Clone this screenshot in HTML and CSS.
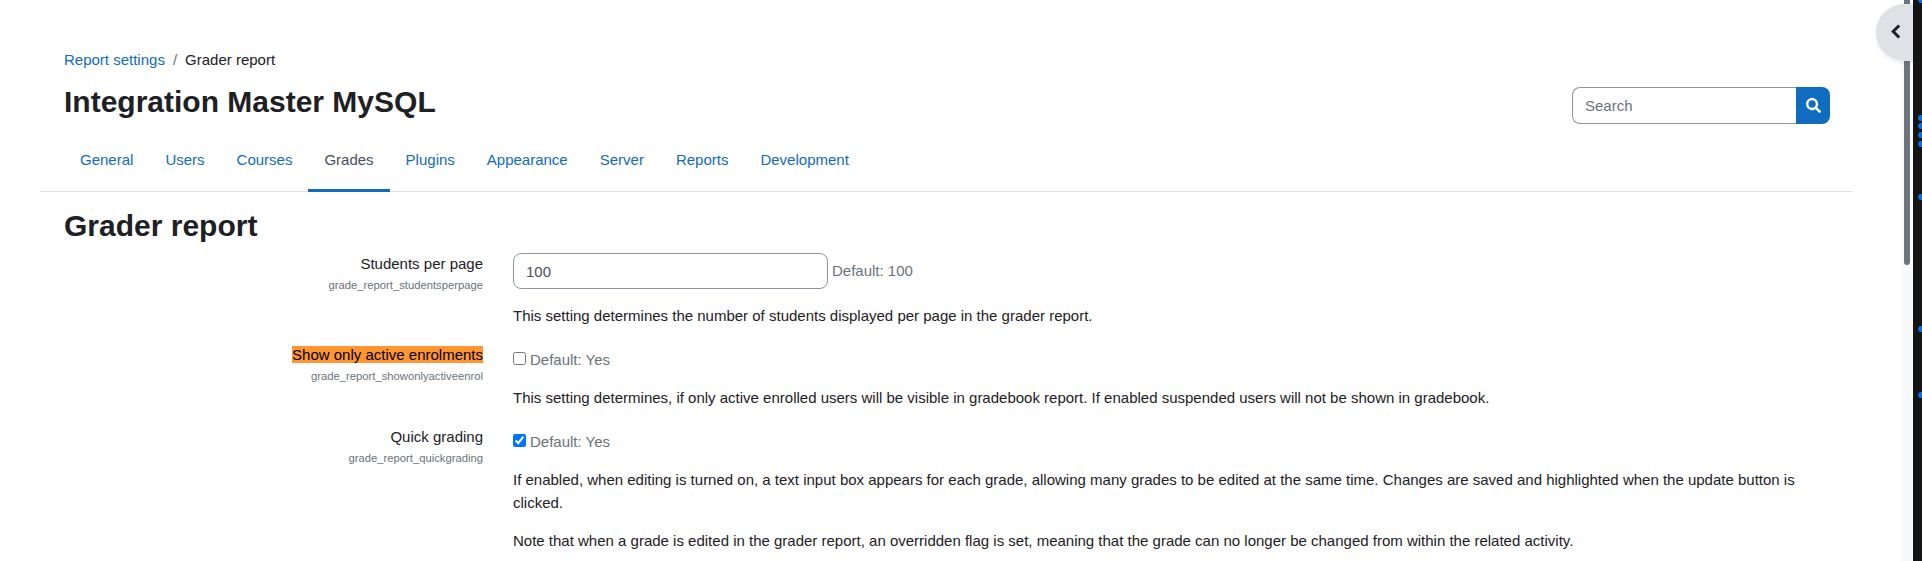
FILE: index.html
```html
<!DOCTYPE html>
<html lang="en">
<head>
  <meta charset="UTF-8" />
  <title>Grader report</title>
  <link rel="stylesheet" href="styles.css">
</head>
<body>

  <div class="page">
    <div class="container">
      <header class="page-header">
        <div>
          <nav class="breadcrumb">
            <a href="#">Report settings</a>
            <span class="sep">/</span>
            <span>Grader report</span>
          </nav>
          <h1>Integration Master MySQL</h1>
        </div>
        <form class="search">
          <input type="text" placeholder="Search">
          <button type="button" aria-label="Search">
            <svg viewBox="0 0 512 512" width="15" height="15"><path fill="#fff" d="M505 442.7L405.3 343c-4.5-4.5-10.6-7-17-7H372c27.6-35.3 44-79.7 44-128C416 93.1 322.9 0 208 0S0 93.1 0 208s93.1 208 208 208c48.3 0 92.7-16.4 128-44v16.3c0 6.4 2.5 12.5 7 17l99.7 99.7c9.4 9.4 24.6 9.4 33.9 0l28.3-28.3c9.4-9.4 9.4-24.6.1-34zM208 336c-70.7 0-128-57.2-128-128 0-70.7 57.2-128 128-128 70.7 0 128 57.2 128 128 0 70.7-57.2 128-128 128z"/></svg>
          </button>
        </form>
      </header>

      <ul class="tabs">
        <li><a href="#">General</a></li>
        <li><a href="#">Users</a></li>
        <li><a href="#">Courses</a></li>
        <li><a href="#" class="active">Grades</a></li>
        <li><a href="#">Plugins</a></li>
        <li><a href="#">Appearance</a></li>
        <li><a href="#">Server</a></li>
        <li><a href="#">Reports</a></li>
        <li><a href="#">Development</a></li>
      </ul>

      <div class="content">
        <h2>Grader report</h2>

        <div class="setting setting-first">
          <div class="setting-label">
            <label>Students per page</label>
            <small>grade_report_studentsperpage</small>
          </div>
          <div class="setting-body">
            <div class="control">
              <input class="text-input" type="text" value="100">
              <span class="default">Default: 100</span>
            </div>
            <p>This setting determines the number of students displayed per page in the grader report.</p>
          </div>
        </div>

        <div class="setting">
          <div class="setting-label">
            <label><span class="highlight">Show only active enrolments</span></label>
            <small>grade_report_showonlyactiveenrol</small>
          </div>
          <div class="setting-body">
            <div class="control control-check">
              <input type="checkbox">
              <span class="default">Default: Yes</span>
            </div>
            <p>This setting determines, if only active enrolled users will be visible in gradebook report. If enabled suspended users will not be shown in gradebook.</p>
          </div>
        </div>

        <div class="setting">
          <div class="setting-label">
            <label>Quick grading</label>
            <small>grade_report_quickgrading</small>
          </div>
          <div class="setting-body">
            <div class="control control-check">
              <input type="checkbox" checked>
              <span class="default">Default: Yes</span>
            </div>
            <p>If enabled, when editing is turned on, a text input box appears for each grade, allowing many grades to be edited at the same time. Changes are saved and highlighted when the update button is clicked.</p>
            <p>Note that when a grade is edited in the grader report, an overridden flag is set, meaning that the grade can no longer be changed from within the related activity.</p>
          </div>
        </div>
      </div>
    </div>
  </div>

  <div class="scrollbar"><div class="thumb"></div></div>

  <div class="strip">
    <i class="dot dot-1"></i>
    <i class="dot dot-2"></i>
    <i class="dot dot-3"></i>
    <i class="dot dot-4"></i>
    <i class="dot dot-5"></i>
    <i class="dot dot-6"></i>
    <i class="dot dot-7"></i>
    <i class="dot dot-8"></i>
  </div>

  <button class="drawer-toggle" type="button" aria-label="Open block drawer">
    <svg viewBox="0 0 10 15" width="10" height="15"><polyline points="8.2,1.5 2.2,7.5 8.2,13.5" fill="none" stroke="#1d2125" stroke-width="3"/></svg>
  </button>

</body>
</html>
```

FILE: styles.css
```css
* {
  margin: 0;
  padding: 0;
  box-sizing: border-box;
}

html, body {
  height: 100%;
  overflow: hidden;
}

body {
  display: flex;
  font-family: "Liberation Sans", Arial, sans-serif;
  font-size: 15px;
  line-height: 22.5px;
  color: #1d2125;
  background: #fff;
}

a {
  color: #0f6cbf;
  text-decoration: none;
}

.page {
  flex: 1;
  min-width: 0;
  padding-left: 40px;
  padding-right: 48px;
}

.page-header {
  display: flex;
  justify-content: space-between;
  align-items: flex-start;
  padding: 49px 23px 0 24px;
  height: 137px;
}

.breadcrumb {
  display: flex;
  gap: 8px;
}

.breadcrumb .sep {
  color: #6a737b;
}

h1 {
  margin-top: 12px;
  font-size: 30px;
  line-height: 36px;
  font-weight: 700;
}

.search {
  display: flex;
  margin-top: 38px;
  height: 37px;
}

.search input {
  width: 224px;
  padding: 1px 12px 0;
  font: inherit;
  color: #1d2125;
  border: 1px solid #8f959e;
  border-right: 0;
  border-radius: 8px 0 0 8px;
  outline: 0;
}

.search input::placeholder {
  color: #6a737b;
}

.search button {
  width: 34px;
  border: 0;
  border-radius: 0 8px 8px 0;
  background: #0f6cbf;
  display: flex;
  align-items: center;
  justify-content: center;
}

.tabs {
  display: flex;
  list-style: none;
  padding-left: 24px;
  border-bottom: 1px solid #dee2e6;
  height: 55px;
}

.tabs a {
  display: block;
  height: 55px;
  padding: 12px 16px 0;
}

.tabs a.active {
  color: #495057;
  border-bottom: 3px solid #0f6cbf;
}

.content {
  padding: 0 24px;
}

h2 {
  margin-top: 16px;
  font-size: 30px;
  line-height: 36px;
  font-weight: 700;
}

.setting {
  display: flex;
  gap: 30px;
  margin-top: 16px;
}

.setting-first {
  margin-top: 9px;
}

.setting-label {
  flex: 0 0 419px;
  text-align: right;
}

.setting-label label {
  display: block;
  line-height: 22px;
}

.setting-label small {
  display: block;
  font-size: 11.25px;
  line-height: 16px;
  margin-top: 2px;
  color: #6a737b;
}

.highlight {
  background: #ff9632;
  color: #000;
}

.setting-body {
  flex: 1;
  min-width: 0;
}

.control {
  display: flex;
  align-items: center;
  gap: 4px;
}

.control-check {
  padding-top: 5px;
}

.default {
  color: #6a737b;
}

.text-input {
  width: 315px;
  height: 36px;
  padding: 0 12px;
  font: inherit;
  color: #495057;
  border: 1px solid #8f959e;
  border-radius: 8px;
  outline: 0;
}

input[type="checkbox"] {
  width: 13px;
  height: 13px;
  margin-bottom: 3px;
}

.setting-body p {
  margin-top: 16px;
}

.scrollbar {
  flex: 0 0 12px;
  background: #f8f9fa;
  padding: 0 3px;
}

.thumb {
  height: 265px;
  background: #6c757d;
  border-radius: 0 0 3px 3px;
}

.strip {
  position: relative;
  flex: 0 0 9px;
  background: #141414;
}

/* notification dots, cut off by the window edge */
.dot {
  position: absolute;
  left: 5px;
  width: 6px;
  height: 6px;
  border-radius: 50%;
  background: #0a6fdb;
}

.dot-1 { top: -3px; }
.dot-2 { top: 115px; }
.dot-3 { top: 123px; }
.dot-4 { top: 132px; }
.dot-5 { top: 141px; }
.dot-6 { top: 194px; }
.dot-7 { top: 326px; }
.dot-8 { top: 392px; }

.drawer-toggle {
  position: absolute;
  top: 4px;
  right: 9px;
  width: 37px;
  height: 57px;
  border: 0;
  border-radius: 28.5px 0 0 28.5px;
  background: #dee2e6;
  box-shadow: 0 2px 4px rgba(0, 0, 0, 0.08);
  display: flex;
  align-items: center;
  padding: 0 0 3px 15px;
}
```
